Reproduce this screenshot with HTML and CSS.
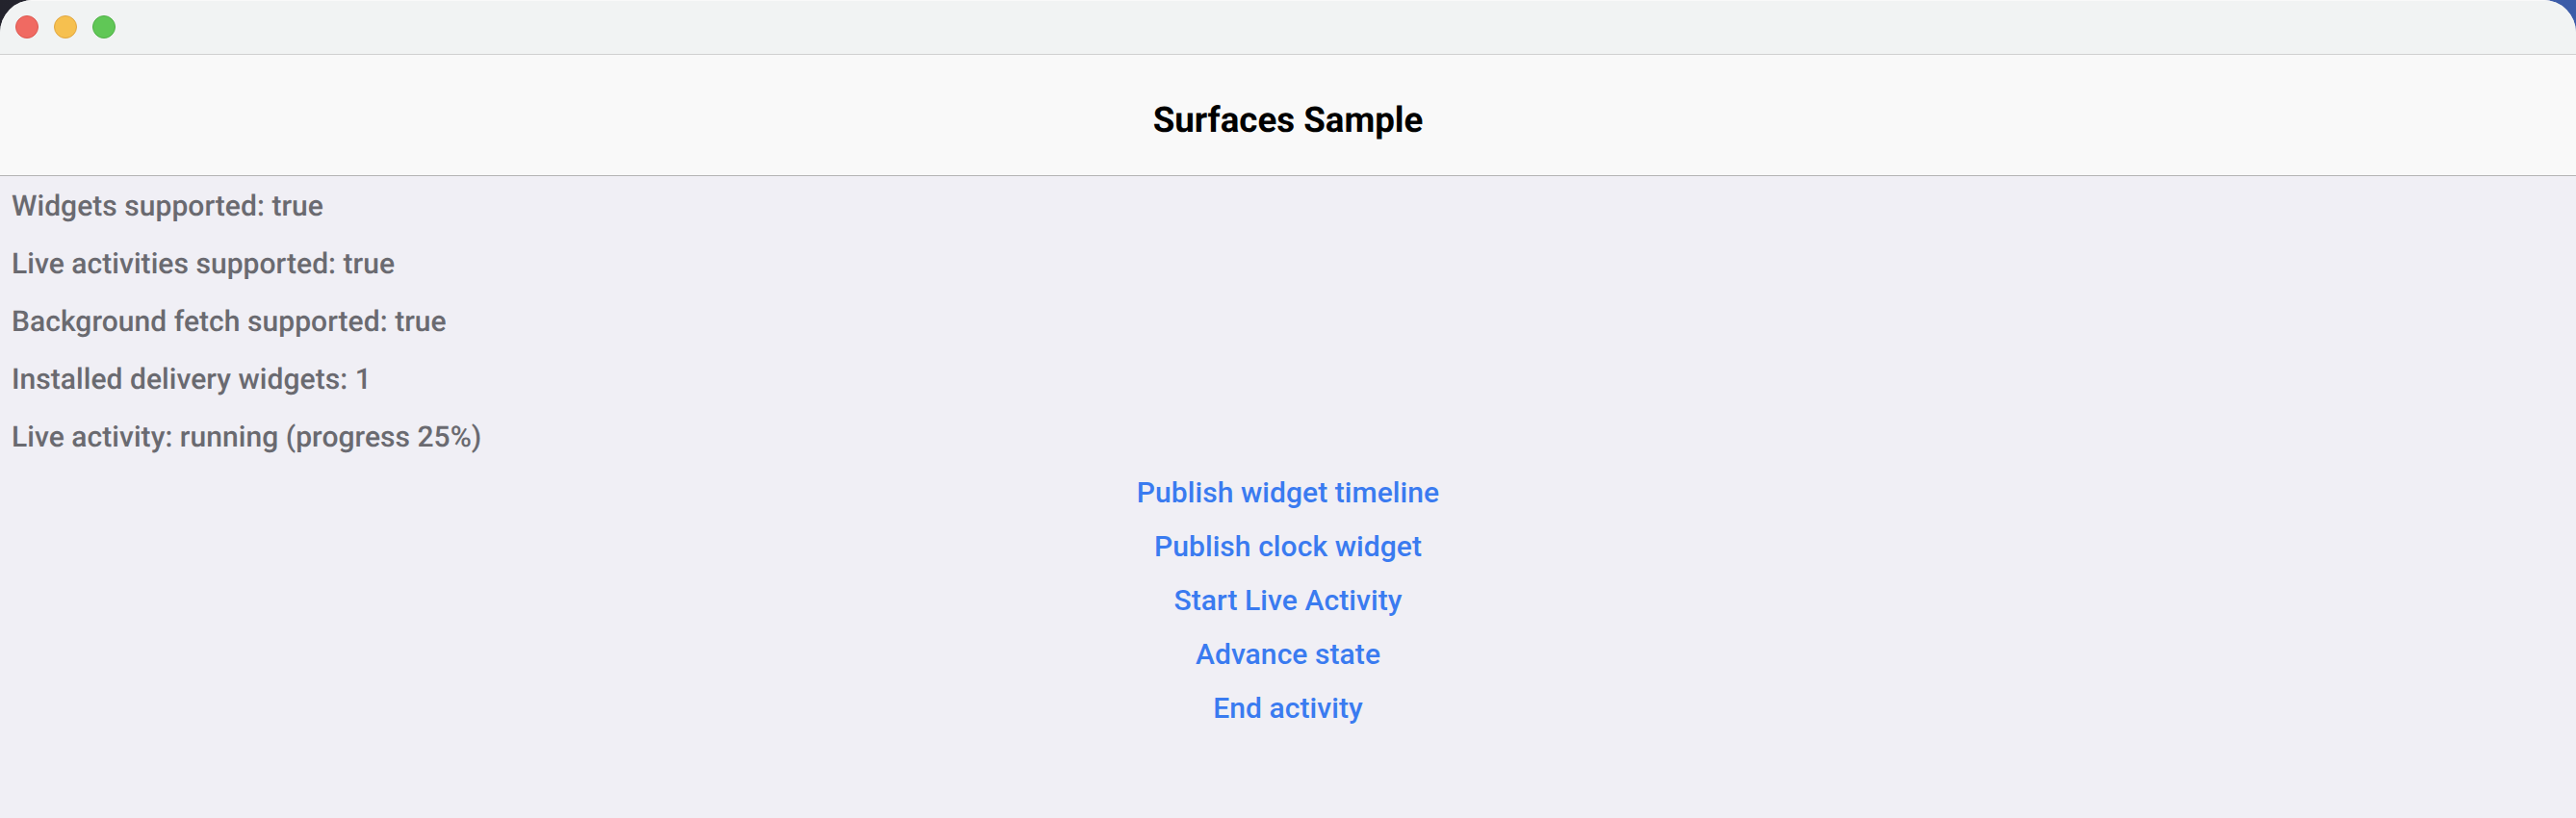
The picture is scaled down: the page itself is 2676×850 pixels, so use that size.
FILE: index.html
```html
<!DOCTYPE html>
<html lang="en">
<head>
<meta charset="utf-8">
<title>Surfaces Sample</title>
<link rel="stylesheet" href="styles.css">
</head>
<body>
<div class="window">
  <div class="titlebar">
    <span class="light red"></span>
    <span class="light yellow"></span>
    <span class="light green"></span>
  </div>
  <header class="navbar"><h1 class="title">Surfaces Sample</h1></header>
  <main class="content">
    <p class="status">Widgets supported: true</p>
    <p class="status">Live activities supported: true</p>
    <p class="status">Background fetch supported: true</p>
    <p class="status">Installed delivery widgets: 1</p>
    <p class="status">Live activity: running (progress 25%)</p>
    <div class="actions">
      <button class="action">Publish widget timeline</button>
      <button class="action">Publish clock widget</button>
      <button class="action">Start Live Activity</button>
      <button class="action">Advance state</button>
      <button class="action">End activity</button>
    </div>
  </main>
</div>
</body>
</html>
```
FILE: styles.css
```css
* { box-sizing: border-box; }
html, body { margin: 0; height: 100%; }
body {
  width: 2676px;
  height: 850px;
  overflow: hidden;
  background: linear-gradient(90deg, #23232c 0%, #2f3f78 60%, #3c5ca8 100%);
  font-family: Roboto, sans-serif;
  text-rendering: geometricPrecision;
}
.window {
  height: 850px;
  display: flex;
  flex-direction: column;
  border-radius: 34px 34px 0 0;
  overflow: hidden;
  background: #f0eff5;
}
.titlebar {
  height: 57px;
  flex: none;
  display: flex;
  align-items: center;
  gap: 16px;
  padding: 0 0 2px 16px;
  background: #f1f3f3;
  border-bottom: 1px solid #d0d0d0;
  border-top: 1px solid #f9f9f9;
}
.light {
  width: 24px;
  height: 24px;
  border-radius: 50%;
  border: 1px solid;
}
.red { background: #f06a62; border-color: #dc5850; }
.yellow { background: #f6c04f; border-color: #e0a640; }
.green { background: #60c756; border-color: #4fb046; }
.navbar {
  height: 126px;
  flex: none;
  display: flex;
  align-items: center;
  justify-content: center;
  padding-top: 10px;
  background: #f9f9f9;
  border-bottom: 1px solid #b4b4b4;
}
.title {
  margin: 0;
  font-size: 36.7px;
  font-weight: 700;
  line-height: 40px;
  color: #000;
}
.content {
  flex: 1;
  display: flex;
  flex-direction: column;
  padding-top: 1px;
}
.status {
  margin: 0;
  height: 60px;
  padding-left: 12px;
  font-size: 30px;
  font-weight: 500;
  line-height: 62px;
  letter-spacing: 0.05px;
  color: #6a6a70;
}
.actions {
  display: flex;
  flex-direction: column;
  align-items: center;
}
.action {
  height: 56px;
  padding: 0;
  border: 0;
  background: none;
  font-family: inherit;
  font-size: 30px;
  font-weight: 500;
  line-height: 56px;
  letter-spacing: 0.07px;
  color: #3a7bf0;
}
```
